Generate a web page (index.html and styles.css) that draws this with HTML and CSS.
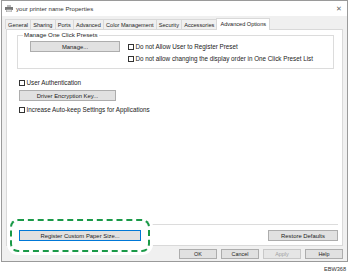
FILE: index.html
```html
<!DOCTYPE html>
<html>
<head>
<meta charset="utf-8">
<link rel="stylesheet" href="styles.css">
</head>
<body>
<div class="stage">
  <div class="window">
    <div class="titlebar">
      <svg class="ticon" width="8" height="7" viewBox="0 0 8 7">
        <rect x="2" y="0" width="4" height="2" fill="#bbb"/>
        <rect x="0" y="2" width="8" height="3" fill="#777"/>
        <rect x="1.5" y="4.5" width="5" height="2.5" fill="#ddd" stroke="#888" stroke-width="0.5"/>
      </svg>
      <span class="ttext">your printer name Properties</span>
      <span class="close">✕</span>
    </div>
    <div class="tabs">
      <div class="tab">General</div>
      <div class="tab">Sharing</div>
      <div class="tab">Ports</div>
      <div class="tab">Advanced</div>
      <div class="tab">Color Management</div>
      <div class="tab">Security</div>
      <div class="tab">Accessories</div>
      <div class="tab active">Advanced Options</div>
    </div>
    <div class="panel">
      <fieldset class="group">
        <legend>Manage One Click Presets</legend>
        <div class="grouprow">
          <div class="btn manage">Manage...</div>
          <div class="checks">
            <label class="chk"><span class="box"></span>Do not Allow User to Register Preset</label>
            <label class="chk"><span class="box"></span>Do not allow changing the display order in One Click Preset List</label>
          </div>
        </div>
      </fieldset>
      <label class="chk ua"><span class="box"></span>User Authentication</label>
      <div class="btn dek">Driver Encryption Key...</div>
      <label class="chk ak"><span class="box"></span>Increase Auto-keep Settings for Applications</label>
      <div class="spacer"></div>
      <div class="sep"></div>
      <div class="bottomrow">
        <div class="btn rcps">Register Custom Paper Size...</div>
        <div class="btn rd">Restore Defaults</div>
      </div>
    </div>
    <div class="footer">
      <div class="btn fb">OK</div>
      <div class="btn fb">Cancel</div>
      <div class="btn fb disabled">Apply</div>
      <div class="btn fb">Help</div>
    </div>
    <div class="highlight"></div>
  </div>
  <div class="code">EBW368</div>
</div>
</body>
</html>
```
FILE: styles.css
```css
* { box-sizing: border-box; }
html, body { margin: 0; padding: 0; background: #fff; }
body {
  font-family: "Liberation Sans", Arial, sans-serif;
  font-size: 6px;
  color: #222;
  width: 350px;
  height: 276px;
  overflow: hidden;
}
.stage { padding: 0 2px 0 1px; }
.window {
  position: relative;
  width: 347px;
  height: 262px;
  border: 1px solid #9a9a9a;
  background: #f0f0f0;
  display: flex;
  flex-direction: column;
}
.titlebar {
  height: 15px;
  background: #fff;
  display: flex;
  align-items: center;
  padding-left: 3px;
  padding-right: 5px;
}
.ticon { margin-right: 3px; }
.ttext { font-size: 6.1px; color: #333; flex: 1; }
.close { font-size: 7px; color: #666; }
.tabs {
  display: flex;
  align-items: flex-end;
  margin: 2px 0 0 3px;
  height: 11px;
}
.tab {
  height: 10px;
  padding: 0 2.1px;
  border: 1px solid #d9d9d9;
  border-bottom: none;
  border-left: none;
  background: #f0f0f0;
  display: flex;
  align-items: center;
  font-size: 5.6px;
}
.tab:first-child { border-left: 1px solid #d9d9d9; }
.tab.active {
  height: 12px;
  background: #fff;
  border-left: 1px solid #d9d9d9;
  padding: 0 3px;
  margin-left: -1px;
  margin-bottom: -1px;
  position: relative;
  z-index: 1;
  align-items: flex-start;
  padding-top: 2px;
}
.panel {
  margin: 0 4px;
  height: 217px;
  background: #fff;
  border: 1px solid #d9d9d9;
  display: flex;
  flex-direction: column;
  padding: 0 4px 4px 11px;
}
.group {
  margin: 2px 4px 0 -1px;
  padding: 1px 0 0 12px;
  border: 1px solid #dcdcdc;
  height: 37px;
  min-width: 0;
}
.group legend {
  padding: 0 1px;
  margin-left: -7px;
  font-size: 6.2px;
  line-height: 6px;
}
.grouprow { display: flex; align-items: flex-start; }
.btn {
  height: 11px;
  background: #e1e1e1;
  border: 1px solid #adadad;
  display: flex;
  align-items: center;
  justify-content: center;
  font-size: 5.9px;
  color: #222;
}
.manage { width: 90px; margin-top: 2px; }
.checks { display: flex; flex-direction: column; gap: 5px; margin-left: 8px; margin-top: 4px; }
.chk { display: flex; align-items: center; font-size: 6.3px; line-height: 7px; }
.box {
  width: 6px; height: 6px;
  border: 1px solid #333;
  background: #fff;
  margin-right: 1.5px;
  flex: none;
}
.ua { margin-top: 10px; margin-left: 1px; }
.dek { width: 97px; margin-top: 4px; margin-left: 1px; }
.ak { margin-top: 5px; margin-left: 1px; }
.spacer { flex: 1; }
.sep { height: 1px; background: #dcdcdc; margin: 0 0 5px 0; }
.bottomrow { display: flex; justify-content: space-between; align-items: center; }
.rcps {
  width: 122px;
  margin-left: 1px;
  border-color: #0078d7;
  position: relative;
  z-index: 2;
}
.rd { width: 70px; }
.footer {
  display: flex;
  justify-content: flex-end;
  gap: 4px;
  padding: 3px 4px 0 0;
}
.fb { width: 38px; height: 10px; font-size: 5.4px; }
.disabled { color: #a0a0a0; border-color: #c8c8c8; background: #e6e6e6; }
.highlight {
  position: absolute;
  left: 8px;
  top: 218px;
  width: 140px;
  height: 33px;
  border: 2.6px dashed #1a9a48;
  border-radius: 8px;
  background: #fff;
  box-shadow: 0 0 0 3px #fff;
  z-index: 1;
}
.code {
  text-align: right;
  font-size: 5.6px;
  color: #333;
  padding-right: 2px;
  margin-top: 4px;
}
```
